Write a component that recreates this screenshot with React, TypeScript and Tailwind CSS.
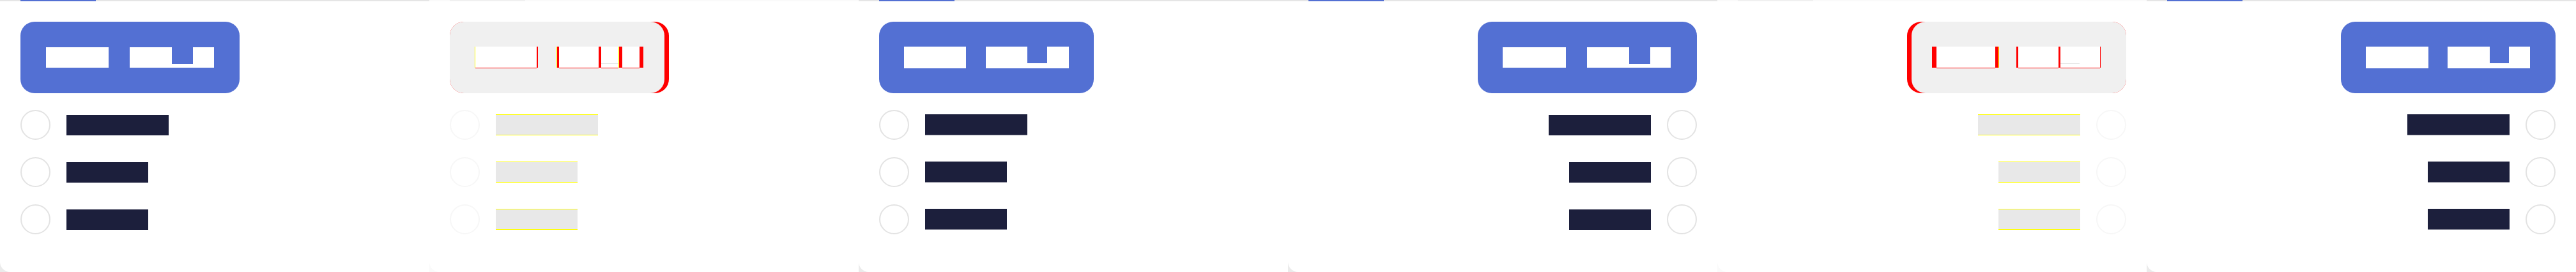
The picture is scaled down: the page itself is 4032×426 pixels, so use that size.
const panels = [
  {
    rtl: false,
    btn: 'w-[343px]',
    pad: 'pl-[40px] pt-[40px]',
    h: 'h-[32px]',
    b1: 'w-[98px]',
    gap: 'gap-[33px]',
    a: 'w-[66px]',
    n: 'w-[33px]',
    b: 'w-[33px]',
    soft: false,
  },
  {
    rtl: false,
    btn: 'w-[336px]',
    pad: 'pl-[39px] pt-[39px]',
    h: 'h-[34px]',
    b1: 'w-[97px]',
    gap: 'gap-[31px]',
    a: 'w-[65px]',
    n: 'w-[31px]',
    b: 'w-[34px]',
    soft: true,
  },
  {
    rtl: true,
    btn: 'w-[343px]',
    pad: 'pl-[39px] pt-[40px]',
    h: 'h-[32px]',
    b1: 'w-[99px]',
    gap: 'gap-[33px]',
    a: 'w-[66px]',
    n: 'w-[33px]',
    b: 'w-[32px]',
    soft: false,
  },
  {
    rtl: true,
    btn: 'w-[336px]',
    pad: 'pl-[39px] pt-[39px]',
    h: 'h-[34px]',
    b1: 'w-[98px]',
    gap: 'gap-[30px]',
    a: 'w-[66px]',
    n: 'w-[30px]',
    b: 'w-[33px]',
    soft: true,
  },
];

type Cfg = (typeof panels)[number];

const bars = ['w-[160px]', 'w-[128px]', 'w-[128px]'];

function Shell({ faded, children }: { faded?: boolean; children: React.ReactNode }) {
  return (
    <div className={`flex h-[426px] w-[672px] shrink-0 flex-col ${faded ? 'bg-[#fafafa]' : 'bg-[#ebebeb]'}`}>
      <div className={`flex h-[2px] ${faded ? 'bg-[#fafafa]' : 'bg-[#e5e5e5]'}`}>
        <div className={`ml-[32px] w-[118px] ${faded ? 'bg-[#f0f0f0]' : 'bg-[#5370d3]'}`} />
      </div>
      <div className="flex-1 rounded-bl-2xl bg-white">{children}</div>
    </div>
  );
}

function Panel({ cfg }: { cfg: Cfg }) {
  return (
    <Shell>
      <div className={`flex flex-col px-[32px] pt-[32px] ${cfg.rtl ? 'items-end' : 'items-start'}`}>
        <div className={`flex h-[112px] items-start rounded-[22px] bg-[#5370d3] ${cfg.btn} ${cfg.pad}`}>
          <div className={`flex ${cfg.gap}`}>
            <div className={`bg-white ${cfg.b1} ${cfg.h}`} />
            <div className={`flex ${cfg.h}`}>
              <div className={`h-full bg-white ${cfg.a}`} />
              <div className={`flex h-full flex-col ${cfg.n}`}>
                <div className="h-[26px] bg-[#5370d3]" />
                <div className="flex-1 bg-white" />
              </div>
              <div className={`h-full bg-white ${cfg.b}`} />
            </div>
          </div>
        </div>
        <div className={`mt-[26px] flex flex-col gap-[27px] ${cfg.rtl ? 'items-end' : 'items-start'}`}>
          {bars.map((w, i) => (
            <div key={i} className={`flex items-center gap-[25px] ${cfg.rtl ? 'flex-row-reverse' : ''}`}>
              <div className="size-[47px] rounded-full border-2 border-[#e3e3e3]" />
              <div
                className={`${w} bg-[#1c1f3c] ${
                  cfg.soft ? 'h-[33px] border-b border-b-[#8c8d9c]' : 'h-[32px]'
                }`}
              />
            </div>
          ))}
        </div>
      </div>
    </Shell>
  );
}

// white strip with the red line along its bottom
function W({ w }: { w: string }) {
  return <div className={`h-[34px] border-b border-b-[#ff0000] bg-white ${w}`} />;
}
function R({ w }: { w: string }) {
  return <div className={`h-[33px] bg-[#ff0000] ${w}`} />;
}
function Y() {
  return <div className="h-[33px] w-px bg-[#ffff00]" />;
}
function Notch({ w }: { w: string }) {
  return (
    <div className={`flex h-[34px] flex-col ${w}`}>
      <div className="h-[26px] bg-white" />
      <div className="h-px bg-[#e8e8e8]" />
      <div className="flex-1 border-b border-b-[#ff0000] bg-white" />
    </div>
  );
}

function DiffRows({ rtl }: { rtl?: boolean }) {
  return (
    <div className={`mt-[26px] flex flex-col gap-[27px] ${rtl ? 'items-end' : 'items-start'}`}>
      {bars.map((w, i) => (
        <div key={i} className={`flex items-center gap-[25px] ${rtl ? 'flex-row-reverse' : ''}`}>
          <div className="size-[47px] rounded-full border-2 border-[#f7f7f7]" />
          <div className={`h-[33px] border-t border-b border-[#ffff00] bg-[#e8e8e8] ${w}`} />
        </div>
      ))}
    </div>
  );
}

function DiffLeft() {
  return (
    <Shell faded>
      <div className="flex flex-col items-start px-[32px] pt-[32px]">
        <div className="h-[112px] w-[343px] rounded-[22px] bg-[#ff0000]">
          <div className="flex h-full w-[336px] items-start rounded-[22px] bg-[#f0f0f0] pt-[39px] pl-[39px]">
            <Y />
            <W w="w-[96px]" />
            <R w="w-[2px]" />
            <div className="w-[29px]" />
            <Y />
            <R w="w-[3px]" />
            <W w="w-[62px]" />
            <R w="w-[4px]" />
            <Notch w="w-[27px]" />
            <Y />
            <R w="w-[5px]" />
            <W w="w-[27px]" />
            <R w="w-[6px]" />
          </div>
        </div>
        <DiffRows />
      </div>
    </Shell>
  );
}

function DiffRight() {
  return (
    <Shell faded>
      <div className="flex flex-col items-end px-[32px] pt-[32px]">
        <div className="flex h-[112px] w-[343px] justify-end rounded-[22px] bg-[#ff0000]">
          <div className="flex h-full w-[336px] items-start rounded-[22px] bg-[#f0f0f0] pt-[39px] pl-[32px]">
            <R w="w-[7px]" />
            <W w="w-[92px]" />
            <R w="w-[5px]" />
            <Y />
            <div className="w-[27px]" />
            <R w="w-[3px]" />
            <W w="w-[63px]" />
            <R w="w-[3px]" />
            <Notch w="w-[30px]" />
            <W w="w-[32px]" />
            <R w="w-[1px]" />
          </div>
        </div>
        <DiffRows rtl />
      </div>
    </Shell>
  );
}

export default function App() {
  return (
    <div className="flex h-[426px] w-[4032px] overflow-hidden bg-white">
      <Panel cfg={panels[0]} />
      <DiffLeft />
      <Panel cfg={panels[1]} />
      <Panel cfg={panels[2]} />
      <DiffRight />
      <Panel cfg={panels[3]} />
    </div>
  );
}
